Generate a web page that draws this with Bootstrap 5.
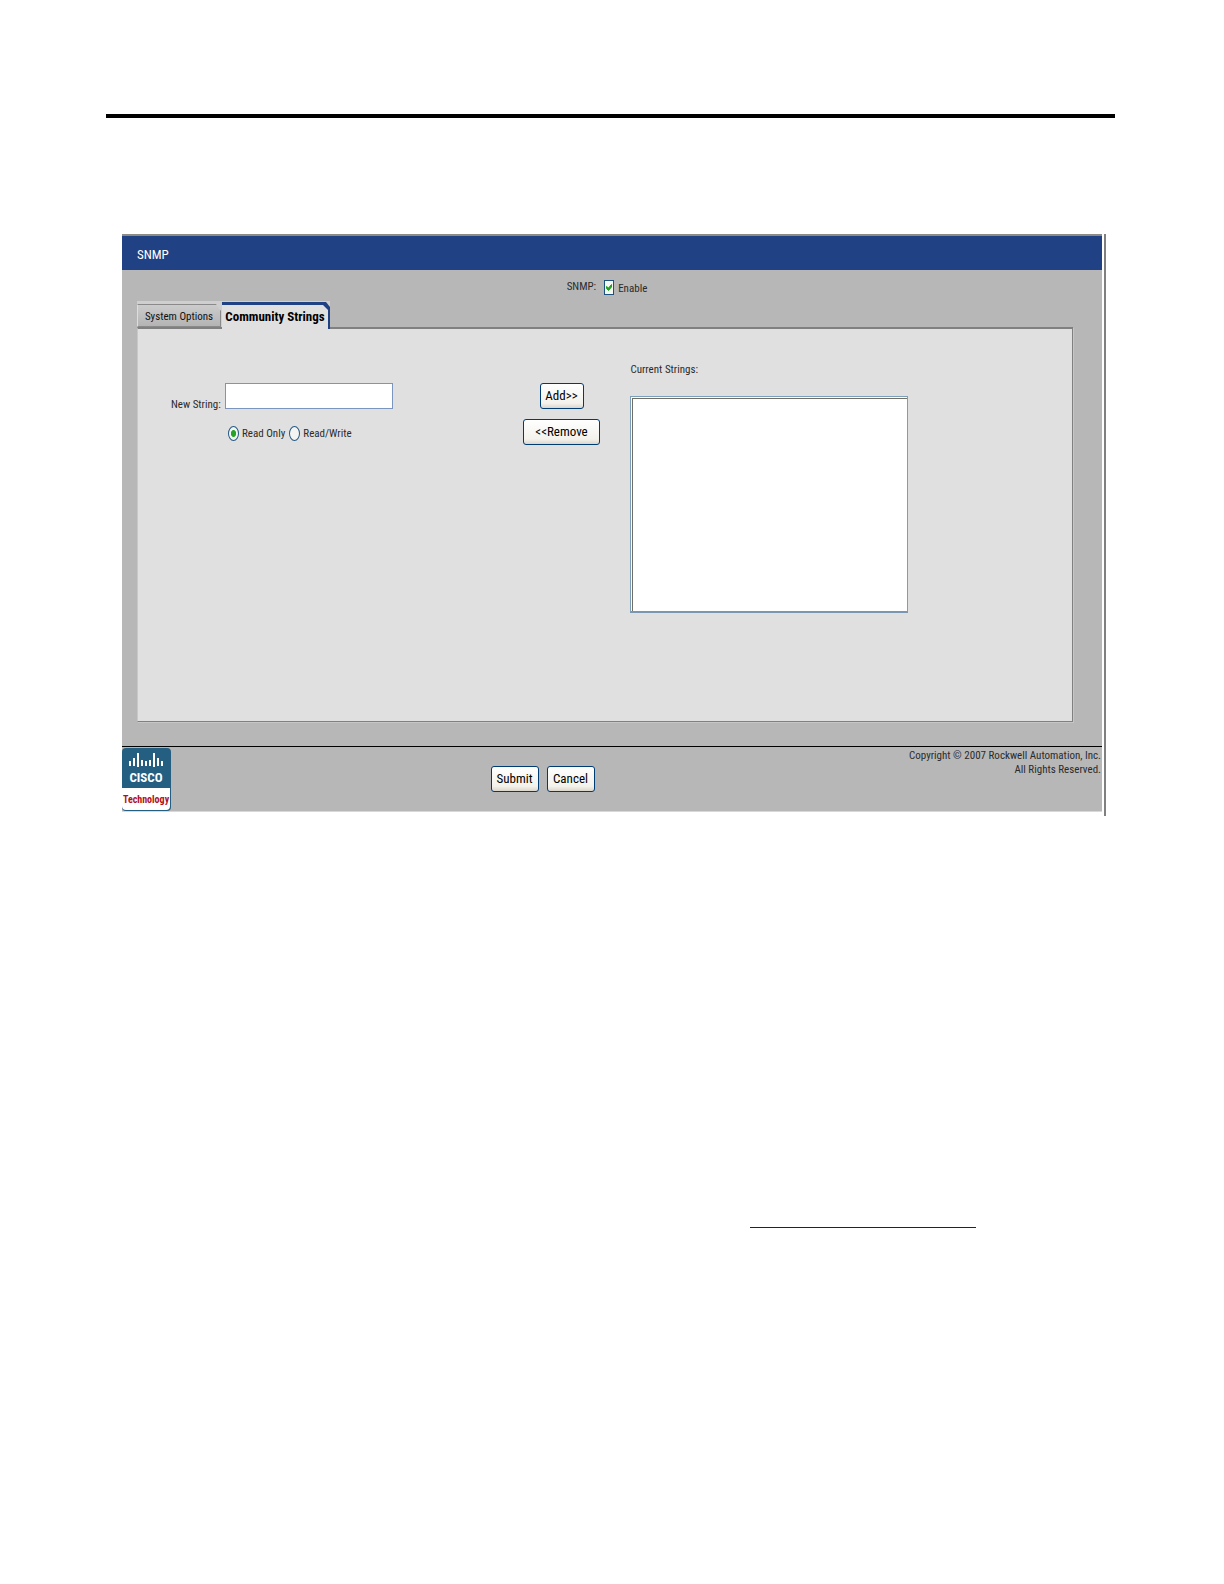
<!DOCTYPE html>
<html lang="en">
<head>
<meta charset="utf-8">
<meta name="viewport" content="width=device-width, initial-scale=1">
<title>SNMP</title>
<link href="https://cdn.jsdelivr.net/npm/bootstrap@5.3.0/dist/css/bootstrap.min.css" rel="stylesheet">
<style>
  body { font: 11px/16px "Roboto Condensed", Lato, sans-serif; color: #2b2b2b; background: #fff; }
  .doc-page { padding: 114px 109px 0 106px; }
  .doc-rule { height: 4px; background: #000; }
  .app-frame { margin: 116px 9px 0 16px; padding: 0 2px 4px 0; border-right: 2px solid #808080; }
  .app-window { background: #b7b7b7; border-top: 2px solid #8d8b85; }
  .app-title { height: 34px; padding: 2px 15px 0; background: #204284; color: #fff; font-size: 13px; font-weight: 400; line-height: 34px; }
  .enable-row { height: 31px; padding: 3px 10px 0 0; }
  .app-main { padding: 0 29px 24px 15px; }

  .tab-strip { width: 193px; height: 26px; background: #cfcfcf; white-space: nowrap; }
  .tab-item { color: #111; text-align: center; text-decoration: none; }
  .tab-off { width: 84px; height: 23px; background: linear-gradient(#cccccc, #b4b4b4); border: 1px solid #8a8a8a; border-left-color: #ddd; clip-path: polygon(0 0, 79px 0, 100% 7px, 100% 100%, 0 100%); line-height: 24px; }
  .tab-on { width: 108px; height: 27px; margin-bottom: -2px; background: #204284; clip-path: polygon(0 0, 104px 0, 100% 5px, 100% 100%, 0 100%); padding: 3px 2px 0 0; position: relative; z-index: 1; }
  .tab-on span { display: block; height: 24px; background: #e0e0e0; clip-path: polygon(0 0, 101px 0, 100% 5px, 100% 100%, 0 100%); font-size: 13px; font-weight: 700; color: #000; line-height: 24px; }

  .panel-box { display: grid; grid-template-columns: 362fr 130fr 443fr; min-height: 395px; background: #e0e0e0; border: 1px solid #808080; border-top-width: 2px; border-left-color: #c8c8c8; box-shadow: 1px 1px #c6c6c6; }
  .strings-form { padding: 54px 0 0 33px; white-space: nowrap; }
  .strings-form .name-label { width: 54px; padding-top: 14px; }
  .text-field { width: 168px; height: 26px; border: 1px solid #7b96bd; background: #fff; border-radius: 0; padding: 0 4px; }
  .kinds { margin: 11px 0 0 57px; gap: 3px; }
  .kinds label { padding: 2px 1px 0 0; }
  .move-btns { padding: 54px 6px 0 0; gap: 10px; }
  .xp-btn { height: 26px; border: 1px solid #003c74; border-radius: 3px; background: linear-gradient(#fff, #f3f2ec 80%, #dcd6cb); color: #000; font: inherit; font-size: 13px; line-height: 22px; padding: 0; }
  .w-add { width: 44px; } .w-remove { width: 77px; } .w-submit { width: 48px; }
  .current { padding: 33px 0 0 1px; }
  .current label { display: block; margin-bottom: 18px; }
  .list-field { width: 278px; height: 217px; border: 1px solid #7b9ebd; border-bottom: 2px solid #7b96b0; border-radius: 0; background: #fff; box-shadow: inset 1px 1px #fff, inset 2px 2px #716f64; }

  .tick-box { appearance: none; width: 10px; height: 15px; margin: 0; border: 1px solid #1c5180; background: #f6f8f6 url("data:image/svg+xml,%3Csvg xmlns='http://www.w3.org/2000/svg' viewBox='0 0 8 13'%3E%3Cpath d='M1.5 5.5v2L3.5 9.5 6.500 6V3.500L3.500 7z' fill='%2321a121' stroke='%2321a121'/%3E%3C/svg%3E") center / 100% 100%; }
  .pick-dot { appearance: none; width: 11px; height: 15px; margin: 0; border: 1px solid #235a85; border-radius: 50%; background: #f4f4f2; }
  .pick-dot:checked { background: radial-gradient(ellipse 3px 4px, #25a525 75%, #f4f4f2 100%); }

  .app-footer { min-height: 65px; border-top: 1px solid #000; border-bottom: 1px solid #d8d8d8; display: grid; grid-template-columns: 1fr auto 1fr; }
  .logo-art { display: block; margin-top: 1px; }
  .footer-btns { padding: 19px 139px 0 0; }
  .legal { padding-right: 1px; line-height: 14px; padding-top: 2px; }
  .doc-link { display: block; width: 226px; height: 16px; margin: 396px 0 0 644px; border-bottom: 1px solid #16168c; }
</style>
<script src="https://cdn.jsdelivr.net/npm/bootstrap@5.3.0/dist/js/bootstrap.bundle.min.js"></script>
</head>
<body>
<div class="doc-page">
  <div class="doc-rule"></div>
  <div class="app-frame">
    <main class="app-window">
      <h1 class="app-title m-0">SNMP</h1>
      <div class="enable-row d-flex justify-content-center align-items-center">
        <span class="me-2">SNMP:</span>
        <input class="tick-box" type="checkbox" id="enable" checked>
        <label class="ms-1 pt-1" for="enable">Enable</label>
      </div>
      <div class="app-main">
        <nav class="tab-strip d-flex align-items-end">
          <a class="tab-item tab-off" href="#">System Options</a>
          <a class="tab-item tab-on ms-auto" href="#"><span>Community Strings</span></a>
        </nav>
        <div class="panel-box">
          <div class="strings-form">
            <div class="d-flex">
              <label class="name-label" for="new-string">New String:</label>
              <input class="text-field" type="text" id="new-string">
            </div>
            <div class="kinds d-flex align-items-center">
              <input class="pick-dot" type="radio" name="kind" id="ro" checked>
              <label for="ro">Read Only</label>
              <input class="pick-dot" type="radio" name="kind" id="rw">
              <label for="rw">Read/Write</label>
            </div>
          </div>
          <div class="move-btns d-flex flex-column align-items-center">
            <button class="xp-btn w-add" type="button">Add&gt;&gt;</button>
            <button class="xp-btn w-remove" type="button">&lt;&lt;Remove</button>
          </div>
          <div class="current">
            <label for="current">Current Strings:</label>
            <select class="list-field" id="current" size="8"></select>
          </div>
        </div>
      </div>
      <footer class="app-footer">
        <svg class="logo-art" width="49" height="63" viewBox="0 0 49 63" role="img" aria-label="Cisco Technology">
          <rect width="49" height="63" rx="4" fill="#245f82"/>
          <path d="M0 40h48v18q0 4-4 4H4q-4 0-4-4z" fill="#fff"/>
          <path d="M8 13v5M12 10v8M16 5v14M20 12v6M24 13v5M28 12v6M32 5v14M36 10v8M40 13v5" stroke="#fff" stroke-width="2"/>
          <text x="24" y="34" text-anchor="middle" font-size="13" font-weight="700" fill="#fff">CISCO</text>
          <text x="24" y="55" text-anchor="middle" font-size="10" font-weight="700" fill="#b01020">Technology</text>
        </svg>
        <div class="footer-btns d-flex gap-2">
          <button class="xp-btn w-submit" type="submit">Submit</button>
          <button class="xp-btn w-submit" type="button">Cancel</button>
        </div>
        <div class="legal text-end">Copyright © 2007 Rockwell Automation, Inc.<br>All Rights Reserved.</div>
      </footer>
    </main>
  </div>
  <a class="doc-link" href="#" aria-label="Related page"></a>
</div>
</body>
</html>
